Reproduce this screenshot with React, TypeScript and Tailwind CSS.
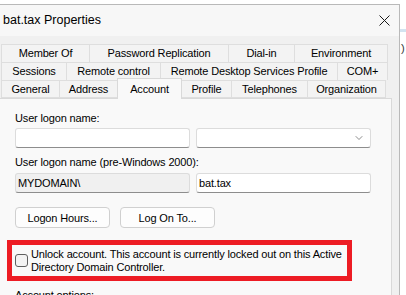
import { ChevronDown } from "lucide-react";

const font = { fontFamily: '"Liberation Sans", Arial, sans-serif' };

type Tab = { label: string; w: string; active?: boolean };

const rows: Tab[][] = [
  [
    { label: "Member Of", w: "w-[89px]" },
    { label: "Password Replication", w: "w-[140px]" },
    { label: "Dial-in", w: "w-[67px]" },
    { label: "Environment", w: "w-[94px]" },
  ],
  [
    { label: "Sessions", w: "w-[66px]" },
    { label: "Remote control", w: "w-[95px]" },
    { label: "Remote Desktop Services Profile", w: "w-[178px]" },
    { label: "COM+", w: "w-[51px]" },
  ],
  [
    { label: "General", w: "w-[59px]" },
    { label: "Address", w: "w-[59px]" },
    { label: "Account", w: "w-[65px]", active: true },
    { label: "Profile", w: "w-[51px]" },
    { label: "Telephones", w: "w-[77px]" },
    { label: "Organization", w: "w-[79px]" },
  ],
];

function TabRow({ tabs, last }: { tabs: Tab[]; last?: boolean }) {
  return (
    <div className="flex h-[18px] pl-[1px] items-end">
      {tabs.map((t) =>
        t.active ? (
          <div
            key={t.label}
            className={`${t.w} h-[21px] -mb-px -ml-px relative z-10 flex items-start justify-center pt-[2px] bg-[#f9f9f9] border border-b-0 border-[#d9d9d9]`}
          >
            {t.label}
          </div>
        ) : (
          <div
            key={t.label}
            className={`${t.w} h-[18px] flex items-center justify-center bg-[#f3f3f3] border border-[#dedede] -ml-px first:ml-0 ${last ? "" : "border-b-0"}`}
          >
            {t.label}
          </div>
        )
      )}
    </div>
  );
}

function Field({ value, disabled, select }: { value?: string; disabled?: boolean; select?: boolean }) {
  return (
    <div
      className={`w-[175px] h-[20px] flex items-center px-[2px] rounded-[3px] border border-[#dcdcdc] border-b-[#8d8d8d] ${disabled ? "bg-[#f0f0f0]" : "bg-white"}`}
    >
      <span className="flex-1">{value}</span>
      {select && <ChevronDown className="w-[12px] h-[12px] mr-[3px] text-[#666]" strokeWidth={1.5} />}
    </div>
  );
}

function Button({ label }: { label: string }) {
  return (
    <div className="w-[95px] h-[21px] flex items-center justify-center rounded-[4px] border border-[#d0d0d0] bg-[#fdfdfd]">
      {label}
    </div>
  );
}

export default function App() {
  return (
    <div className="w-[406px] h-[295px] overflow-hidden bg-white flex" style={font}>
      {/* Dialog window */}
      <div className="w-[400px] h-[295px] mt-[4px] border-t border-r border-[#b9b9b9] bg-[#f0f0f0] flex flex-col text-[11px] tracking-[-0.15px] text-black">
        {/* Title bar */}
        <div className="h-[31px] shrink-0 bg-[#f7f7f7] flex items-center justify-between pl-[3px] pr-[7px]">
          <span className="text-[12.5px] tracking-normal">bat.tax Properties</span>
          <svg width="11" height="11" viewBox="0 0 11 11" className="mr-[2px]">
            <path d="M0.5 0.5 L10.5 10.5 M10.5 0.5 L0.5 10.5" stroke="#1a1a1a" strokeWidth="1" />
          </svg>
        </div>

        {/* Tabs */}
        <div className="pt-[8px] pr-[7px]">
          <TabRow tabs={rows[0]} />
          <TabRow tabs={rows[1]} />
          <TabRow tabs={rows[2]} last />

          {/* Account panel */}
          <div className="-ml-px bg-[#f9f9f9] border border-[#d9d9d9] h-[220px] pt-[12px] pl-[15px] leading-[14px]">
            <div className="mb-[3px]">User logon name:</div>
            <div className="flex gap-[6px]">
              <Field />
              <Field select />
            </div>
            <div className="mt-[7px] mb-[4px]">User logon name (pre-Windows 2000):</div>
            <div className="flex gap-[6px]">
              <Field value="MYDOMAIN\" disabled />
              <Field value="bat.tax" />
            </div>
            <div className="flex gap-[10px] mt-[14px]">
              <Button label="Logon Hours..." />
              <Button label="Log On To..." />
            </div>

            <div className="-ml-[8px] mt-[12px] w-[345px] h-[41px] border-[5px] border-[#ed1c24] flex items-center pl-[3px] gap-[3px]">
              <div className="w-[13px] h-[13px] shrink-0 rounded-[3px] border border-[#5f5f5f] bg-[#f3f3f3]" />
              <div className="leading-[13px] whitespace-nowrap">
                Unlock account. This account is currently locked out on this Active
                <br />
                Directory Domain Controller.
              </div>
            </div>

            <div className="mt-[7px]">Account options:</div>
          </div>
        </div>
      </div>

      {/* Window behind, peeking out at the right */}
      <div className="flex-1 bg-white flex flex-col">
        <div className="h-[29px]" />
        <div className="h-[3px] bg-[#d3e3f0]" />
        <div className="mt-[11px] text-[11px] leading-[11px] text-[#333] pl-[1px]">)</div>
      </div>
    </div>
  );
}
